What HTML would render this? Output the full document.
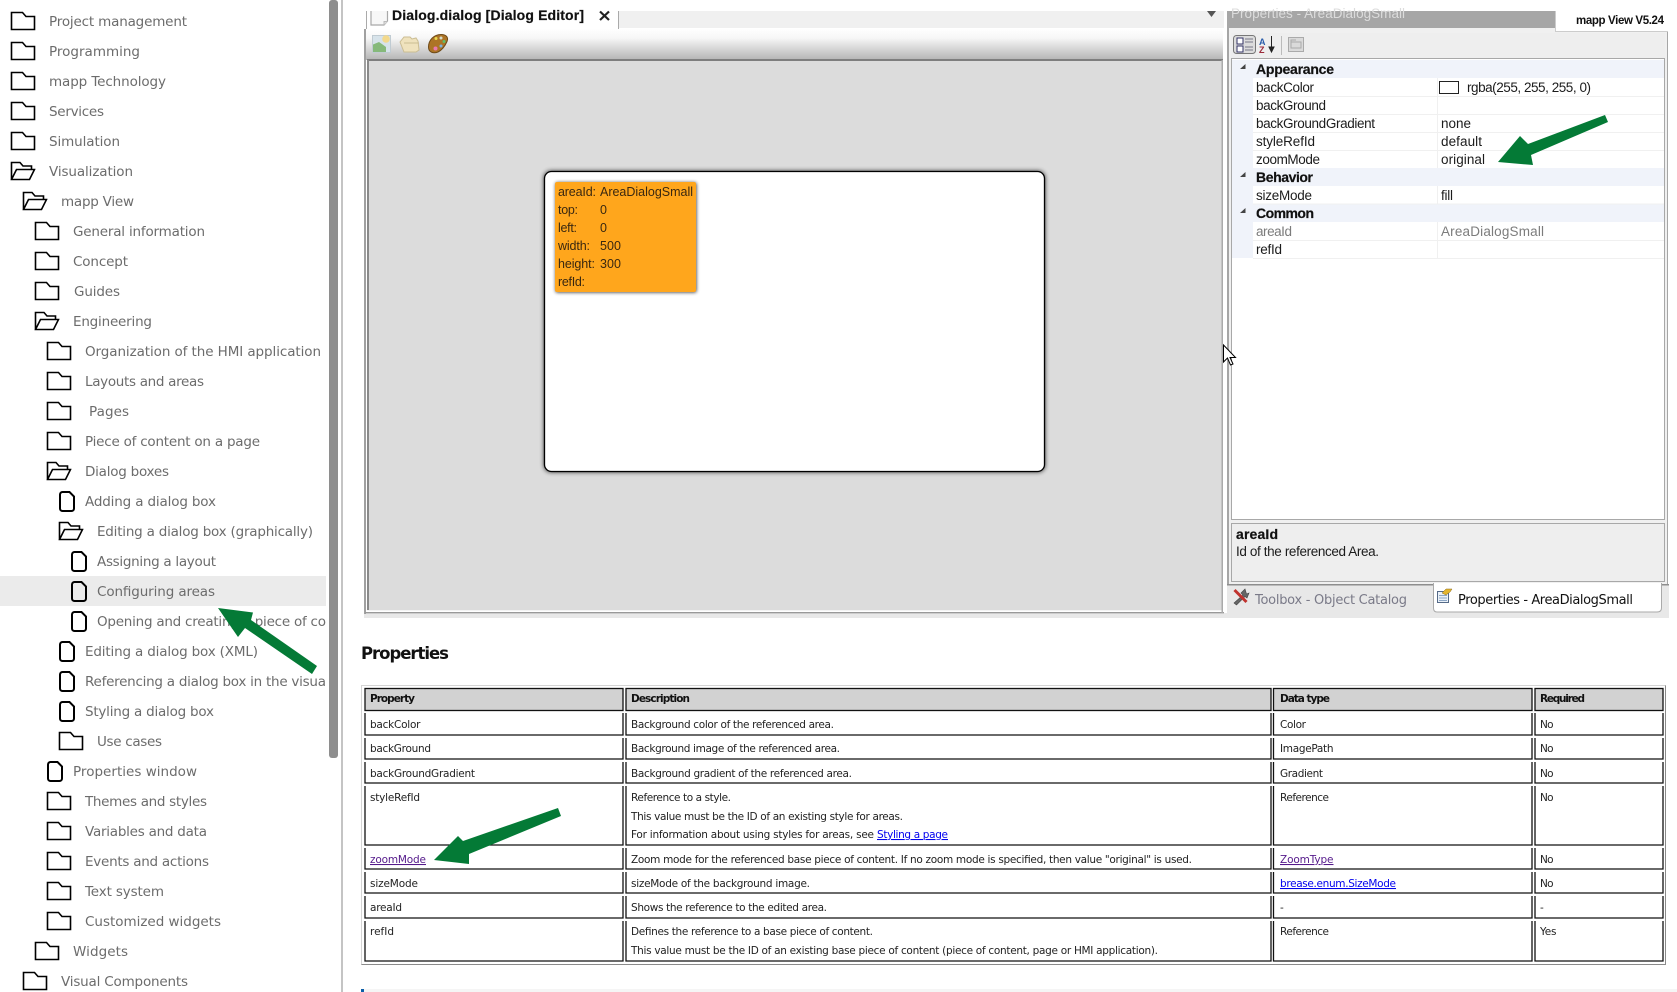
<!DOCTYPE html>
<html lang="en"><head><meta charset="utf-8"><title>Configuring areas</title>
<style>
html,body{margin:0;padding:0;background:#fff;width:1677px;height:992px;overflow:hidden}
svg{display:block}
.s{font:13.5px "DejaVu Sans",sans-serif;fill:#6c6c6c}
.p{font:13.5px "Liberation Sans",sans-serif;fill:#1c1c1c}
.pb{font:bold 14px "Liberation Sans",sans-serif;fill:#111;stroke:#111;stroke-width:.2px}
.o{font:12.5px "Liberation Sans",sans-serif;fill:#3a2810}
.t{font:10.5px "DejaVu Sans",sans-serif;fill:#222}
.th{font:bold 10.5px "DejaVu Sans",sans-serif;fill:#111}
.l{fill:#0000ee;text-decoration:underline}
.v{fill:#551a8b;text-decoration:underline}
.h{fill:#d2d2d2;stroke:#111;stroke-width:1.3}
.b{fill:none;stroke:#111;stroke-width:1.3}
</style></head><body>
<svg width="1677" height="992" viewBox="0 0 1677 992" xmlns="http://www.w3.org/2000/svg">
<defs>
<symbol id="f" width="25" height="19" viewBox="0 0 25 19"><path d="M1 1H12L15.500 5H24V18H1Z" fill="none" stroke="#000" stroke-width="1.600"/></symbol>
<symbol id="n" width="25" height="19" viewBox="0 0 25 19"><path d="M1 18V1H9.500L12.500 4.500H21V8M1 18L6 8H24L19 18Z" fill="none" stroke="#000" stroke-width="1.600"/></symbol>
<symbol id="d" width="16" height="21" viewBox="0 0 16 21"><path d="M3.500 1H10.500L15 5.500V17.500A2.500 2.500 0 0 1 12.500 20H3.500A2.500 2.500 0 0 1 1 17.500V3.500A2.500 2.500 0 0 1 3.500 1Z" fill="none" stroke="#000" stroke-width="2"/></symbol>
<clipPath id="side"><rect x="0" y="0" width="326" height="992"/></clipPath>
<clipPath id="top"><rect x="360" y="11" width="60" height="20"/></clipPath>
<filter id="sh" x="-10%" y="-10%" width="120%" height="120%"><feGaussianBlur stdDeviation="2.500"/></filter>
<filter id="sh2" x="-15%" y="-15%" width="130%" height="130%"><feGaussianBlur stdDeviation="1.800"/></filter>
<linearGradient id="tb" x1="0" y1="0" x2="0" y2="1"><stop offset="0" stop-color="#fff"/><stop offset=".3" stop-color="#f6f6f6"/><stop offset="1" stop-color="#b4b4b4"/></linearGradient>
</defs>

<!-- sidebar -->
<rect x="0" y="576" width="326" height="30" fill="#ebebeb"/>
<rect x="329" y="0" width="9" height="758" rx="3" fill="#8e8e8e"/>
<rect x="341" y="0" width="2" height="992" fill="#c4c4c4"/>
<g clip-path="url(#side)">
<use href="#f" x="10.500" y="11.500"/><text class="s" x="49" y="26" textLength="138">Project management</text>
<use href="#f" x="10.500" y="41.500"/><text class="s" x="49" y="56" textLength="91">Programming</text>
<use href="#f" x="10.500" y="71.500"/><text class="s" x="49" y="86" textLength="117">mapp Technology</text>
<use href="#f" x="10.500" y="101.500"/><text class="s" x="49" y="116" textLength="55">Services</text>
<use href="#f" x="10.500" y="131.500"/><text class="s" x="49" y="146" textLength="71">Simulation</text>
<use href="#n" x="10.500" y="161.500"/><text class="s" x="49" y="176" textLength="84">Visualization</text>
<use href="#n" x="22.500" y="191.500"/><text class="s" x="61" y="206" textLength="73">mapp View</text>
<use href="#f" x="34.500" y="221.500"/><text class="s" x="73" y="236" textLength="132">General information</text>
<use href="#f" x="34.500" y="251.500"/><text class="s" x="73" y="266" textLength="55">Concept</text>
<use href="#f" x="34.500" y="281.500"/><text class="s" x="74" y="296" textLength="46">Guides</text>
<use href="#n" x="34.500" y="311.500"/><text class="s" x="73" y="326" textLength="79">Engineering</text>
<use href="#f" x="46.500" y="341.500"/><text class="s" x="85" y="356" textLength="236">Organization of the HMI application</text>
<use href="#f" x="46.500" y="371.500"/><text class="s" x="85" y="386" textLength="119">Layouts and areas</text>
<use href="#f" x="46.500" y="401.500"/><text class="s" x="89" y="416" textLength="40">Pages</text>
<use href="#f" x="46.500" y="431.500"/><text class="s" x="85" y="446" textLength="175">Piece of content on a page</text>
<use href="#n" x="46.500" y="461.500"/><text class="s" x="85" y="476" textLength="84">Dialog boxes</text>
<use href="#d" x="59" y="491"/><text class="s" x="85" y="506" textLength="131">Adding a dialog box</text>
<use href="#n" x="58.500" y="521.500"/><text class="s" x="97" y="536" textLength="216">Editing a dialog box (graphically)</text>
<use href="#d" x="71" y="551"/><text class="s" x="97" y="566" textLength="119">Assigning a layout</text>
<use href="#d" x="71" y="581"/><text class="s" x="97" y="596" textLength="118">Configuring areas</text>
<use href="#d" x="71" y="611"/><text class="s" x="97" y="626" textLength="229">Opening and creating a piece of co</text>
<use href="#d" x="59" y="641"/><text class="s" x="85" y="656" textLength="173">Editing a dialog box (XML)</text>
<use href="#d" x="59" y="671"/><text class="s" x="85" y="686" textLength="241">Referencing a dialog box in the visua</text>
<use href="#d" x="59" y="701"/><text class="s" x="85" y="716" textLength="129">Styling a dialog box</text>
<use href="#f" x="58.500" y="731.500"/><text class="s" x="97" y="746" textLength="65">Use cases</text>
<use href="#d" x="47" y="761"/><text class="s" x="73" y="776" textLength="124">Properties window</text>
<use href="#f" x="46.500" y="791.500"/><text class="s" x="85" y="806" textLength="122">Themes and styles</text>
<use href="#f" x="46.500" y="821.500"/><text class="s" x="85" y="836" textLength="122">Variables and data</text>
<use href="#f" x="46.500" y="851.500"/><text class="s" x="85" y="866" textLength="124">Events and actions</text>
<use href="#f" x="46.500" y="881.500"/><text class="s" x="85" y="896" textLength="79">Text system</text>
<use href="#f" x="46.500" y="911.500"/><text class="s" x="85" y="926" textLength="136">Customized widgets</text>
<use href="#f" x="34.500" y="941.500"/><text class="s" x="73" y="956" textLength="55">Widgets</text>
<use href="#f" x="22.500" y="971.500"/><text class="s" x="61" y="986" textLength="127">Visual Components</text>
</g>

<!-- editor -->
<rect x="364" y="613" width="1305" height="5" fill="#e8e8e8"/>
<rect x="364" y="11" width="860" height="603" fill="#fff"/>
<rect x="618" y="11" width="606" height="17" fill="#f0f0f0"/>
<rect x="618" y="11" width="1" height="18" fill="#aaa"/>
<rect x="366" y="11" width="1" height="18" fill="#aaa"/>
<g clip-path="url(#top)">
<path d="M371 5H387.500V21L384 25H371Z" fill="#f7f7f7" stroke="#a8a8a8" stroke-width="1.200"/>
<path d="M384 25V21.500H387.500" fill="#ddd" stroke="#bbb"/>
</g>
<text class="pb" x="392" y="20" textLength="192">Dialog.dialog [Dialog Editor]</text>
<path d="M600 11.500L609 20M609 11.500L600 20" stroke="#222" stroke-width="2.200" fill="none"/>
<path d="M1207 11H1216L1211.500 17Z" fill="#555"/>
<rect x="365" y="29" width="858" height="31" fill="url(#tb)"/>
<rect x="364" y="29" width="2" height="585" fill="#a0a0a0"/>
<rect x="367" y="60" width="856" height="550" fill="#dcdcdc"/>
<rect x="367" y="59" width="856" height="2" fill="#7e7e7e"/>
<rect x="367" y="60" width="2" height="550" fill="#8a8a8a"/>
<rect x="367" y="610" width="855" height="1" fill="#f4f4f4"/>
<rect x="365" y="612" width="859" height="1.500" fill="#999"/>
<rect x="1221.500" y="60" width="1.500" height="553" fill="#aaa"/>

<!-- toolbar icons -->
<rect x="372.500" y="35.500" width="18" height="17" fill="#d7e3ea" stroke="#c0cbd2"/>
<path d="M373 52V44.500L379 42L386 47V52Z" fill="#86b97a"/>
<circle cx="386" cy="39" r="3.800" fill="#f3d98c"/>
<path d="M400 42L404 37H410L412 39L416 38L418 41L419 50L416 52H404Z" fill="#efe2bd" stroke="#cbbd93"/>
<path d="M404 43H419" stroke="#cbbd93"/>
<path d="M428.500 47C428.500 40 434 34.500 441 34.500C447 34.500 448.500 38 447 41.500C445 46 442 50 438 52C433 54 428.500 52 428.500 47Z" fill="#ad7426" stroke="#6e4a18"/>
<circle cx="436" cy="38.500" r="1.500" fill="#ead94e"/><circle cx="441" cy="38" r="1.500" fill="#d6dccb"/><circle cx="444" cy="41.500" r="1.500" fill="#5fbe6d"/><circle cx="441" cy="46" r="1.500" fill="#7ab4e4"/><circle cx="435.500" cy="48.500" r="2" fill="#e87ab0"/>

<!-- dialog -->
<rect x="544" y="171" width="501" height="301" rx="7" fill="#000" opacity=".8" filter="url(#sh)"/>
<rect x="544.500" y="171.500" width="500" height="300" rx="7" fill="#fff" stroke="#000" stroke-width="1.300"/>
<rect x="555.500" y="182.500" width="141" height="110" rx="2" fill="#000" opacity=".75" filter="url(#sh2)"/>
<rect x="555" y="182" width="141" height="110" rx="2" fill="#ffa61c"/>
<text class="o" x="558" y="196" textLength="38">areaId:</text><text class="o" x="600" y="196" textLength="93">AreaDialogSmall</text>
<text class="o" x="558" y="214" textLength="20">top:</text><text class="o" x="600" y="214">0</text>
<text class="o" x="558" y="232" textLength="19">left:</text><text class="o" x="600" y="232">0</text>
<text class="o" x="558" y="250" textLength="32">width:</text><text class="o" x="600" y="250" textLength="21">500</text>
<text class="o" x="558" y="268" textLength="37">height:</text><text class="o" x="600" y="268" textLength="21">300</text>
<text class="o" x="558" y="286" textLength="27">refId:</text>

<!-- properties panel -->
<rect x="1227" y="11" width="442" height="574" fill="#a6a6a6"/>
<rect x="1229" y="28" width="438" height="556" fill="#f0f0f0"/>
<text x="1231" y="18" font-family="Liberation Sans, sans-serif" font-size="13.500" fill="#dcdcdc" textLength="174">Properties - AreaDialogSmall</text>
<rect x="1555" y="11" width="122" height="20" fill="#fff"/>
<rect x="1555" y="11" width="1" height="20" fill="#ccc"/>
<rect x="1555" y="31" width="113" height="1" fill="#ccc"/>
<rect x="1668" y="31" width="9" height="560" fill="#fff"/>
<text x="1576" y="24" font-family="Liberation Sans, sans-serif" font-size="11.500" font-weight="bold" fill="#111" textLength="88">mapp View V5.24</text>
<rect x="1231" y="33" width="434" height="25" fill="#eeeeee"/>
<rect x="1233.500" y="35.500" width="22" height="18" rx="3" fill="#dcdcdc" stroke="#777"/>
<rect x="1237" y="38" width="6" height="6" fill="#fff" stroke="#336"/><rect x="1237" y="46" width="6" height="6" fill="#fff" stroke="#336"/>
<path d="M1245 39H1253M1245 42H1253M1245 47H1253M1245 50H1253" stroke="#778" stroke-width="1"/>
<text x="1259" y="45" font-family="Liberation Sans, sans-serif" font-size="9" font-weight="bold" fill="#2a5caa">A</text>
<text x="1259" y="53" font-family="Liberation Sans, sans-serif" font-size="9" font-weight="bold" fill="#9c2a3a">Z</text>
<path d="M1271.500 36V50M1269 47L1271.500 52L1274 47Z" stroke="#222" fill="#222"/>
<rect x="1281" y="36" width="1" height="19" fill="#bbb"/>
<rect x="1288.500" y="37.500" width="15" height="14" fill="#dadada" stroke="#aaa"/>
<path d="M1291 42H1301V48H1291ZM1291 42V40H1296" fill="none" stroke="#aaa"/>

<rect x="1231.500" y="58.500" width="433" height="461" fill="#fff" stroke="#a8a8a8"/>
<rect x="1232" y="60" width="21" height="198" fill="#f0f3fa"/>
<rect x="1232" y="60" width="432" height="18" fill="#f0f3fa"/>
<rect x="1232" y="168" width="432" height="18" fill="#f0f3fa"/>
<rect x="1232" y="204" width="432" height="18" fill="#f0f3fa"/>
<path d="M1253 96.500H1664M1253 114.500H1664M1253 132.500H1664M1253 150.500H1664M1253 204H1664M1253 240.500H1664M1253 258.500H1664" stroke="#f0f0f0"/>
<path d="M1437.500 78V168M1437.500 186V204M1437.500 222V258" stroke="#f0f0f0"/>
<path d="M1240 69H1245.500V64ZM1240 177H1245.500V172ZM1240 213H1245.500V208Z" fill="#444"/>
<text class="pb" x="1256" y="74" textLength="78">Appearance</text>
<text class="p" x="1256" y="92" textLength="58">backColor</text>
<rect x="1439.500" y="81.500" width="19" height="12" fill="#fff" stroke="#222"/>
<text class="p" x="1467" y="92" textLength="124">rgba(255, 255, 255, 0)</text>
<text class="p" x="1256" y="110" textLength="70">backGround</text>
<text class="p" x="1256" y="128" textLength="119">backGroundGradient</text><text class="p" x="1441" y="128" textLength="30">none</text>
<text class="p" x="1256" y="146" textLength="59">styleRefId</text><text class="p" x="1441" y="146" textLength="41">default</text>
<text class="p" x="1256" y="164" textLength="64">zoomMode</text><text class="p" x="1441" y="164" textLength="44">original</text>
<text class="pb" x="1256" y="182" textLength="57">Behavior</text>
<text class="p" x="1256" y="200" textLength="56">sizeMode</text><text class="p" x="1441" y="200" textLength="12">fill</text>
<text class="pb" x="1256" y="218" textLength="58">Common</text>
<text class="p" style="fill:#7c7c7c" x="1256" y="236" textLength="36">areaId</text><text class="p" style="fill:#7c7c7c" x="1441" y="236" textLength="103">AreaDialogSmall</text>
<text class="p" x="1256" y="254" textLength="26">refId</text>

<rect x="1231.500" y="523.500" width="433" height="58" fill="#eeeeee" stroke="#a8a8a8"/>
<text class="pb" x="1236" y="539" textLength="42">areaId</text>
<text class="p" x="1236" y="556" textLength="143">Id of the referenced Area.</text>

<rect x="1227" y="584" width="442" height="34" fill="#e8e8e8"/>
<rect x="1227" y="584" width="442" height="1.500" fill="#8e8e8e"/>
<path d="M1433.500 583V608Q1433.500 612 1437 612H1657Q1661.500 612 1661.500 608V583" fill="#fff" stroke="#aaa"/>
<!-- toolbox icon -->
<path d="M1245 589L1241 593L1243 595L1234 603L1236.500 605L1245 596.500L1247 598L1249 593L1246.500 594Z" fill="#666" stroke="#444" stroke-width=".600"/>
<path d="M1234.500 590L1246.500 602" stroke="#c0332e" stroke-width="3"/>
<text x="1255" y="604" font-family="DejaVu Sans, sans-serif" font-size="13" fill="#7a7a88" textLength="152">Toolbox - Object Catalog</text>
<!-- properties tab icon -->
<rect x="1437.500" y="591.500" width="11" height="11" fill="#eaf1f8" stroke="#556a88"/>
<path d="M1439 595.500H1447M1439 598H1447M1439 600.500H1447" stroke="#6f8fb5" stroke-width=".800"/>
<path d="M1442 593L1446 589L1452 589L1450 592L1446 595Z" fill="#e3b52e" stroke="#8a6a20" stroke-width=".500"/>
<text x="1458" y="604" font-family="DejaVu Sans, sans-serif" font-size="13" fill="#111" textLength="175">Properties - AreaDialogSmall</text>

<!-- cursor -->
<path d="M1223.500 345V362L1227.500 358L1230.500 365L1233 364L1230 357.500H1235.500Z" fill="#fff" stroke="#000" stroke-width="1"/>

<!-- heading -->
<text x="361" y="659" font-family="DejaVu Sans, sans-serif" font-size="16.500" font-weight="bold" fill="#111" textLength="88">Properties</text>

<!-- table -->
<rect x="361.500" y="685.500" width="1304" height="279" fill="#fff" stroke="#8a8a8a"/>
<path d="M361.500 964.500V685.500H1665.500" fill="none" stroke="#d4d4d4" stroke-width="1"/>
<rect class="h" x="365" y="688.500" width="258" height="22"/><rect class="h" x="626" y="688.500" width="645" height="22"/><rect class="h" x="1273.500" y="688.500" width="258.500" height="22"/><rect class="h" x="1535" y="688.500" width="128" height="22"/>
<path class="b" d="M365 713V735H623V713M626 713V735H1271V713M1273.500 713V735H1532V713M1535 713V735H1663V713"/>
<path class="b" d="M365 738V759H623V738M626 738V759H1271V738M1273.500 738V759H1532V738M1535 738V759H1663V738"/>
<path class="b" d="M365 762V783H623V762M626 762V783H1271V762M1273.500 762V783H1532V762M1535 762V783H1663V762"/>
<path class="b" d="M365 786V845H623V786M626 786V845H1271V786M1273.500 786V845H1532V786M1535 786V845H1663V786"/>
<path class="b" d="M365 848V869H623V848M626 848V869H1271V848M1273.500 848V869H1532V848M1535 848V869H1663V848"/>
<path class="b" d="M365 872V893H623V872M626 872V893H1271V872M1273.500 872V893H1532V872M1535 872V893H1663V872"/>
<path class="b" d="M365 896V918H623V896M626 896V918H1271V896M1273.500 896V918H1532V896M1535 896V918H1663V896"/>
<path class="b" d="M365 921V961H623V921M626 921V961H1271V921M1273.500 921V961H1532V921M1535 921V961H1663V921"/>

<text class="th" x="370" y="702" textLength="45">Property</text><text class="th" x="631" y="702" textLength="59">Description</text><text class="th" x="1280" y="702" textLength="50">Data type</text><text class="th" x="1540" y="702" textLength="45">Required</text>
<text class="t" x="370" y="728" textLength="50.500">backColor</text><text class="t" x="631" y="728" textLength="203">Background color of the referenced area.</text><text class="t" x="1280" y="728" textLength="26">Color</text><text class="t" x="1540" y="728" textLength="13.500">No</text>
<text class="t" x="370" y="752" textLength="61">backGround</text><text class="t" x="631" y="752" textLength="209">Background image of the referenced area.</text><text class="t" x="1280" y="752" textLength="53.500">ImagePath</text><text class="t" x="1540" y="752" textLength="13.500">No</text>
<text class="t" x="370" y="777" textLength="105">backGroundGradient</text><text class="t" x="631" y="777" textLength="221">Background gradient of the referenced area.</text><text class="t" x="1280" y="777" textLength="43">Gradient</text><text class="t" x="1540" y="777" textLength="13.500">No</text>
<text class="t" x="370" y="801" textLength="50">styleRefId</text><text class="t" x="631" y="801" textLength="100">Reference to a style.</text><text class="t" x="631" y="820" textLength="272">This value must be the ID of an existing style for areas.</text><text class="t" x="631" y="838" textLength="243">For information about using styles for areas, see</text><text class="t l" x="877" y="838" textLength="71">Styling a page</text><text class="t" x="1280" y="801" textLength="49">Reference</text><text class="t" x="1540" y="801" textLength="13.500">No</text>
<text class="t v" x="370" y="863" textLength="56">zoomMode</text><text class="t" x="631" y="863" textLength="561">Zoom mode for the referenced base piece of content. If no zoom mode is specified, then value "original" is used.</text><text class="t v" x="1280" y="863" textLength="53.500">ZoomType</text><text class="t" x="1540" y="863" textLength="13.500">No</text>
<text class="t" x="370" y="887" textLength="48">sizeMode</text><text class="t" x="631" y="887" textLength="179">sizeMode of the background image.</text><text class="t l" x="1280" y="887" textLength="116">brease.enum.SizeMode</text><text class="t" x="1540" y="887" textLength="13.500">No</text>
<text class="t" x="370" y="911" textLength="32">areaId</text><text class="t" x="631" y="911" textLength="196">Shows the reference to the edited area.</text><text class="t" x="1280" y="911">-</text><text class="t" x="1540" y="911">-</text>
<text class="t" x="370" y="935" textLength="24">refId</text><text class="t" x="631" y="935" textLength="242">Defines the reference to a base piece of content.</text><text class="t" x="631" y="954" textLength="527">This value must be the ID of an existing base piece of content (piece of content, page or HMI application).</text><text class="t" x="1280" y="935" textLength="49">Reference</text><text class="t" x="1540" y="935" textLength="16.500">Yes</text>

<!-- bottom note start -->
<rect x="361" y="989" width="1316" height="3" fill="#f5f5f5"/>
<rect x="361" y="989" width="3" height="3" fill="#0b5ea8"/>

<!-- arrows -->
<g fill="#047a36">
<path d="M218 608L253 612.500L251 620L317 666L312 674L245 628L238 637Z"/>
<path d="M1498 162L1520 136L1528 144L1605 115L1608 122L1531 155L1533 165Z"/>
<path d="M434 860L458 836L463 841L558 808L561 816L469 854L469 864Z"/>
</g>
</svg>
</body></html>
